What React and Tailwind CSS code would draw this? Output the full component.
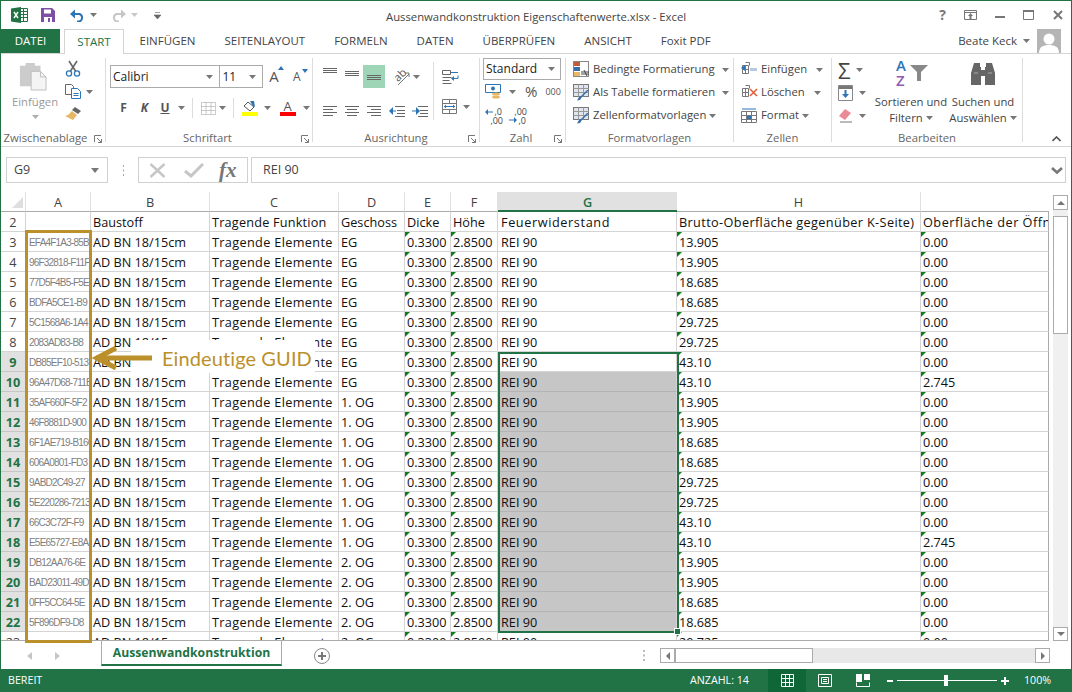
import React from 'react';

const FONT = "font-['Open_Sans','Noto_Sans',sans-serif]";

// sheet data
const guids = ['EFA4F1A3-85B', '96F32818-F11F', '77D5F4B5-F5E', 'BDFA5CE1-B9', '5C1568A6-1A4', '2083AD83-B8', 'DB85EF10-513', '96A47D68-711B', '35AF660F-5F2', '46F8881D-900', '6F1AE719-B16C', '606A0801-FD3', '9ABD2C49-27', '5E220286-7213', '66C3C72F-F9', 'E5E65727-E8A', 'DB12AA76-6E', 'BAD23011-49D', '0FF5CC64-5E', '5F896DF9-D8', ''];
const brutto = ['13.905', '13.905', '18.685', '18.685', '29.725', '29.725', '43.10', '43.10', '13.905', '13.905', '18.685', '18.685', '29.725', '29.725', '43.10', '43.10', '13.905', '13.905', '18.685', '18.685', '29.725'];
const geschoss = (i) => (i < 8 ? 'EG' : i < 16 ? '1. OG' : '2. OG');
const GRID = 'grid grid-cols-[25px_65px_119px_129px_66px_46px_47px_179px_244px_128px]';
const LINE = 'border-r border-b border-[#d4d4d4]';

const Caret = ({ className = '' }) => (
  <svg width="7" height="4" viewBox="0 0 7 4" className={`shrink-0 ${className}`}><path d="M0 0h7L3.500 4z" fill="#777" /></svg>
);

const Launcher = () => (
  <svg width="8" height="8" viewBox="0 0 8 8" className="shrink-0"><path d="M.5 7V.5H7M7.500 7.500 3 3M7.500 4v3.500H4" fill="none" stroke="#777" /></svg>
);

const Lines = ({ rows, w = 14 }) => (
  <svg width={w} height="14" viewBox={`0 0 ${w} 14`} className="shrink-0">
    {rows.map(([y, x1, x2], i) => <path key={i} d={`M${x1} ${y}.5H${x2}`} stroke="#666" />)}
  </svg>
);

const Tab = ({ children }) => <div className="px-[14.5px] text-[#444]">{children}</div>;

const Group = ({ w, label, launcher, children }) => (
  <div className={`${w} my-[4px] flex shrink-0 flex-col border-r border-[#dcdcdc]`}>
    <div className="flex-1">{children}</div>
    <div className="relative -mb-[4px] flex h-[16px] items-center justify-center text-[11.3px] text-[#666]">
      {label}
      {launcher && <div className="absolute right-[3px] top-[5px]"><Launcher /></div>}
    </div>
  </div>
);

const StyleItem = ({ icon, children, caretClass = 'ml-1' }) => (
  <div className="flex h-[23px] items-center gap-[3px] text-[11.3px] text-[#444]">
    <div className="flex w-[18px] justify-center">{icon}</div>
    <span className="whitespace-nowrap">{children}</span>
    <Caret className={caretClass} />
  </div>
);

const TableIcon = ({ brush = true }) => (
  <svg width="17" height="17" viewBox="0 0 17 17">
    <rect x=".5" y=".5" width="15" height="12" fill={brush ? '#dfe6ef' : '#fff'} stroke="#777" />
    <path d="M.5 4.500h15M.5 8.500h15M5.500 .5v12M10.500 .5v12" stroke="#999" />
    {brush && <path d="M16 6 9 13l-2 3-3 .5 2-3.500 2-1 6-6z" fill="#3a6ea8" />}
  </svg>
);

const CellGridIcon = ({ children }) => (
  <svg width="17" height="15" viewBox="0 0 17 15">
    <path d="M1.500 3.500h6v8h-6zM1.500 7.500h6M4.500 3.500v8M4.500 .5h4v3" fill="none" stroke="#777" />
    {children}
  </svg>
);

const Ribbon = () => (
  <div className="flex h-[93px] shrink-0 border-b border-[#d4d4d4] bg-white">
    {/* Zwischenablage */}
    <Group w="w-[105px]" label={<span className="-ml-[15px]">Zwischenablage</span>} launcher>
      <div className="flex">
        <div className="ml-[4px] flex w-[60px] flex-col items-center pt-[3px] text-[11.3px] text-[#999]">
          <svg width="28" height="30" viewBox="0 0 30 32" className="-ml-[5px]">
            <path d="M1 5h6V2h10v3h6v22H1z" fill="#ccc" />
            <path d="M13 11h10l6 6v14H13z" fill="#f4f4f4" stroke="#bbb" />
            <path d="M23 11v6h6" fill="none" stroke="#bbb" />
          </svg>
          <span className="mt-[3px] leading-[16px]">Einfügen</span>
          <Caret className="mt-[5px] opacity-60" />
        </div>
        <div className="flex flex-col items-start gap-[7px] pt-[2px]">
          <svg width="16" height="17" viewBox="0 0 16 17" fill="none">
            <path d="M4 1l6.500 10M12 1 5.500 11" stroke="#666" strokeWidth="1.6" />
            <circle cx="4" cy="13.5" r="2.6" stroke="#2e75b6" strokeWidth="1.3" />
            <circle cx="12" cy="13.5" r="2.6" stroke="#2e75b6" strokeWidth="1.3" />
          </svg>
          <div className="flex items-center gap-[5px]">
            <svg width="16" height="15" viewBox="0 0 16 15" fill="#fff">
              <path d="M.5.5h6l2 2v8h-8z" stroke="#666" />
              <path d="M6.500 4.500h6l3 3v7h-9z" stroke="#2e75b6" />
              <path d="M8.500 9.500h5M8.500 11.500h5" stroke="#2e75b6" />
            </svg>
            <Caret />
          </div>
          <svg width="17" height="15" viewBox="0 0 17 15">
            <path d="M10 1l6 4-3 3-6-4z" fill="#666" />
            <path d="M7 5l5 4-4 5-8-4 3-1z" fill="#e8b766" />
          </svg>
        </div>
      </div>
    </Group>

    {/* Schriftart */}
    <Group w="w-[207px]" label={<span className="-ml-[3px]">Schriftart</span>} launcher>
      <div className="flex items-center pl-[4px] pt-[7px]">
        <div className="flex h-[23px] w-[111px] items-center justify-between border border-[#ababab] pl-[2px] pr-[6px] text-[12px] text-[#222]">Calibri<Caret /></div>
        <div className="-ml-px flex h-[23px] w-[44px] items-center justify-between border border-[#ababab] pl-[2px] pr-[6px] text-[12px] text-[#222]">11<Caret /></div>
        <div className="relative ml-[6px] w-[20px] text-[15px] text-[#555]">A<span className="absolute left-[9px] top-[1px] h-0 w-0 border-x-[3px] border-b-[4px] border-x-transparent border-b-[#2e75b6]" /></div>
        <div className="relative ml-[3px] w-[20px] pl-[1px] text-[12px] text-[#555]">A<span className="absolute left-[10px] top-[1px] h-0 w-0 border-x-[3px] border-t-[4px] border-x-transparent border-t-[#2e75b6]" /></div>
      </div>
      <div className="flex h-[34px] items-center pl-[7px] pt-[6px] text-[#555]">
        <span className="w-[21px] text-center text-[12px] font-bold">F</span>
        <span className="w-[21px] text-center text-[12px] font-bold italic">K</span>
        <span className="w-[20px] text-center text-[12px] font-bold underline">U</span>
        <Caret className="ml-[3px]" />
        <div className="mx-[7px] h-[20px] w-px bg-[#dcdcdc]" />
        <svg width="15" height="13" viewBox="0 0 15 13" className="ml-[1px]"><path d="M.5.5h14v12H.5zM5 .5v12M10 .5v12M.5 4.500h14M.5 8.500h14" fill="none" stroke="#999" strokeDasharray="1 1" /></svg>
        <Caret className="ml-[3px]" />
        <div className="mx-[7px] h-[20px] w-px bg-[#dcdcdc]" />
        <div className="flex w-[17px] flex-col items-center">
          <svg width="15" height="11" viewBox="0 0 15 11"><path d="M6 1l6 5-4 4-6-5z" fill="#fff" stroke="#555" /><path d="M8 0h4l1 6-2-1z" fill="#2e75b6" /></svg>
          <div className="h-[4px] w-[16px] bg-[#ffff00]" />
        </div>
        <Caret className="ml-[6px]" />
        <div className="ml-[8px] flex w-[17px] flex-col items-center">
          <span className="h-[12px] text-[13px] leading-[12px]">A</span>
          <div className="h-[4px] w-[16px] bg-[#ff0000]" />
        </div>
        <Caret className="ml-[7px]" />
      </div>
    </Group>

    {/* Ausrichtung */}
    <Group w="w-[167px]" label="Ausrichtung" launcher>
      <div className="flex pl-[6px]">
        <div className="flex w-[112px] flex-col">
          <div className="flex h-[31px] items-start pt-[7px]">
            <div className="flex h-[23px] w-[22px] items-start justify-center pt-[2px]"><Lines rows={[[1, 0, 14], [3, 0, 14], [5, 0, 14]]} /></div>
            <div className="flex h-[23px] w-[22px] items-start justify-center pt-[2px]"><Lines rows={[[4, 0, 14], [6, 0, 14], [8, 0, 14]]} /></div>
            <div className="flex h-[23px] w-[22px] items-start justify-center bg-[#9fd5b7] pt-[2px]"><Lines rows={[[8, 0, 14], [10, 0, 14], [12, 0, 14]]} /></div>
            <div className="relative ml-[6px] flex h-[23px] w-[20px] items-center justify-center">
              <span className="-translate-x-[2px] -translate-y-[2px] -rotate-45 text-[11px] leading-none text-[#555]">ab</span>
              <svg width="20" height="20" viewBox="0 0 20 20" className="absolute left-0 top-[2px]"><path d="M7 18 18 7M14 6h4v4" fill="none" stroke="#777" /></svg>
            </div>
            <Caret className="ml-[2px] mt-[10px]" />
          </div>
          <div className="flex h-[37px] items-center pt-[6px]">
            <div className="flex w-[22px] justify-center"><Lines rows={[[2, 0, 14], [5, 0, 10], [8, 0, 14], [11, 0, 10]]} /></div>
            <div className="flex w-[22px] justify-center"><Lines rows={[[2, 0, 14], [5, 2, 12], [8, 0, 14], [11, 2, 12]]} /></div>
            <div className="flex w-[22px] justify-center"><Lines rows={[[2, 0, 14], [5, 4, 14], [8, 0, 14], [11, 4, 14]]} /></div>
            <div className="flex w-[24px] justify-center">
              <svg width="16" height="14" viewBox="0 0 16 14"><path d="M6 2.500h10M8 6.500h8M8 9.500h8M6 12.500h10" stroke="#666" /><path d="M0 7l4-4v8z" fill="#2e75b6" /><path d="M3 6.500h4v1H3z" fill="#2e75b6" /></svg>
            </div>
            <div className="flex w-[22px] justify-center">
              <svg width="16" height="14" viewBox="0 0 16 14"><path d="M6 2.500h10M8 6.500h8M8 9.500h8M6 12.500h10" stroke="#666" /><path d="M8 7 4 3v8z" fill="#2e75b6" /><path d="M0 6.500h5v1H0z" fill="#2e75b6" /></svg>
            </div>
          </div>
        </div>
        <div className="mx-[2px] mt-[4px] h-[58px] w-px bg-[#dcdcdc]" />
        <div className="flex flex-col pl-[6px]">
          <svg width="17" height="16" viewBox="0 0 17 16" className="mt-[11px]"><path d="M.5 1.500h8v4h-8zM.5 8.500h9M.5 11.500h7M.5 14.500h9" fill="none" stroke="#666" /><path d="M9 3.500h7M11 9.500h5v-3" fill="none" stroke="#2e75b6" /><path d="M9 9.500l3-2.500v5z" fill="#2e75b6" /></svg>
          <div className="mt-[14px] flex items-center gap-[5px]">
            <svg width="16" height="15" viewBox="0 0 16 15"><path d="M.5.5h14v14H.5zM.5 4.500h14M.5 10.500h14M7.500 .5v4M7.500 10.500v4" fill="none" stroke="#777" /><path d="M2 7.500h11" stroke="#2e75b6" /><path d="M2 7.500l2-2v4zM13 7.500l-2-2v4z" fill="#2e75b6" /></svg>
            <Caret />
          </div>
        </div>
      </div>
    </Group>

    {/* Zahl */}
    <Group w="w-[86px]" label={<span className="-ml-[3px]">Zahl</span>} launcher>
      <div className="pl-[3px]">
        <div className="flex h-[22px] w-[78px] items-center justify-between border border-[#ababab] pl-[2px] pr-[5px] text-[12px] text-[#222]">Standard<Caret /></div>
        <div className="flex h-[22px] items-center pl-[2px] pt-[1px]">
          <svg width="17" height="17" viewBox="0 0 17 17"><path d="M.5 1.500h15v8H.5z" fill="#fff" stroke="#2e75b6" /><circle cx="8" cy="5.5" r="2" fill="#2e75b6" /><ellipse cx="11" cy="11" rx="4" ry="1.6" fill="#e8b766" /><ellipse cx="11" cy="14" rx="4" ry="1.6" fill="#e8b766" /></svg>
          <Caret className="ml-[7px]" />
          <span className="ml-[9px] text-[15px] leading-none text-[#555]">%</span>
          <span className="ml-[8px] text-[9px] leading-none text-[#555]">000</span>
        </div>
        <div className="flex h-[25px] items-center gap-[6px] pl-[2px] pt-[2px] text-[9px] leading-[9px] text-[#444]">
          <div className="relative h-[18px] w-[18px]">
            <span className="absolute right-[1px] top-0">,0</span>
            <span className="absolute right-0 bottom-0">,00</span>
            <svg width="8" height="6" viewBox="0 0 8 6" className="absolute left-0 top-[2px]"><path d="M0 3l3-3v6zM3 2.500h5v1H3z" fill="#2e75b6" /></svg>
          </div>
          <div className="relative h-[18px] w-[18px]">
            <span className="absolute right-0 top-0">,00</span>
            <span className="absolute right-[1px] bottom-0">,0</span>
            <svg width="8" height="6" viewBox="0 0 8 6" className="absolute left-0 bottom-[2px]"><path d="M8 3 5 0v6zM0 2.500h5v1H0z" fill="#2e75b6" /></svg>
          </div>
        </div>
      </div>
    </Group>

    {/* Formatvorlagen */}
    <Group w="w-[168px]" label="Formatvorlagen">
      <div className="pl-[6px]">
        <StyleItem icon={
          <svg width="17" height="17" viewBox="0 0 17 17"><rect x=".5" y=".5" width="15" height="15" fill="#fff" stroke="#888" /><path d="M1 1h6v4H1z" fill="#c55a3a" /><path d="M1 6h6v4H1z" fill="#3a6ea8" /><path d="M1 11h6v4H1z" fill="#e8b766" /><path d="M8 11h8M8 13h8M11 9l3 6" stroke="#444" /></svg>
        }>Bedingte Formatierung</StyleItem>
        <StyleItem icon={<TableIcon />}>Als Tabelle formatieren</StyleItem>
        <StyleItem icon={<TableIcon />} caretClass="">Zellenformatvorlagen</StyleItem>
      </div>
    </Group>

    {/* Zellen */}
    <Group w="w-[98px]" label="Zellen">
      <div className="pl-[6px]">
        <StyleItem caretClass="ml-[6px]" icon={<CellGridIcon><path d="M9 6h7v3H9z" fill="#b6c9e0" /><path d="M0 6l4-3v6z" fill="#2e75b6" /></CellGridIcon>}>Einfügen</StyleItem>
        <StyleItem caretClass="ml-[6px]" icon={<CellGridIcon><path d="M9 4l7 7M16 4l-7 7" stroke="#e2603c" strokeWidth="1.6" /></CellGridIcon>}>Löschen</StyleItem>
        <StyleItem caretClass="" icon={
          <svg width="17" height="16" viewBox="0 0 17 16"><path d="M.5 3.500h15v11H.5zM.5 7.500h15M.5 11.500h15M5.500 3.500v11M10.500 3.500v11" fill="none" stroke="#777" /><path d="M6 8h4v3H6z" fill="#2e75b6" /><path d="M1 1h14" stroke="#2e75b6" /></svg>
        }>Format</StyleItem>
      </div>
    </Group>

    {/* Bearbeiten */}
    <Group w="w-[191px]" label="Bearbeiten">
      <div className="flex">
        <div className="flex w-[40px] flex-col items-start pl-[6px]">
          <div className="flex h-[23px] items-center gap-[6px]"><span className="text-[22px] leading-none text-[#444]">Σ</span><Caret /></div>
          <div className="flex h-[23px] items-center gap-[6px]">
            <svg width="15" height="16" viewBox="0 0 15 16"><path d="M.5 .5h14v15H.5z" fill="#fff" stroke="#888" /><path d="M1 1h13v3H1z" fill="#777" /><path d="M6.500 5h2v4h2.500l-3.500 4L4 9h2.500z" fill="#2e75b6" /></svg>
            <Caret />
          </div>
          <div className="flex h-[23px] items-center gap-[6px]">
            <svg width="15" height="14" viewBox="0 0 15 14"><path d="M7 0l6 4-6 7-6-4z" fill="#ea8a96" /><path d="M2 13h12" stroke="#777" /></svg>
            <Caret />
          </div>
        </div>
        <div className="flex w-[78px] flex-col items-center text-[11.3px] leading-[16px] text-[#444]">
          <div className="relative h-[36px] w-[34px]">
            <span className="absolute left-[2px] top-[0px] text-[15px] font-semibold leading-[15px] text-[#2e75b6]">A</span>
            <span className="absolute left-[2px] top-[15px] text-[15px] font-semibold leading-[15px] text-[#8e5bb5]">Z</span>
            <svg width="18" height="16" viewBox="0 0 18 16" className="absolute right-0 top-[7px]"><path d="M0 0h18l-7 7v9H7V7z" fill="#888" /></svg>
          </div>
          <span className="whitespace-nowrap">Sortieren und</span>
          <span className="flex items-center gap-[3px]">Filtern<Caret /></span>
        </div>
        <div className="flex w-[66px] flex-col items-center text-[11.3px] leading-[16px] text-[#444]">
          <svg width="26" height="26" viewBox="0 0 26 26" className="mb-[8px] mt-[2px]">
            <path d="M4 3h6v4h1v18H1V13zM22 3h-6v4h-1v18h10V13zM11 10h4v6h-4z" fill="#666" />
            <path d="M4 13h4M18 13h4" stroke="#aaa" />
          </svg>
          <span className="whitespace-nowrap">Suchen und</span>
          <span className="flex items-center gap-[3px]">Auswählen<Caret /></span>
        </div>
      </div>
    </Group>
    <div className="flex flex-1 items-end justify-end pb-[4px] pr-[10px]">
      <svg width="9" height="6" viewBox="0 0 9 6"><path d="M.5 5 4.500 1l4 4" fill="none" stroke="#555" strokeWidth="1.6" /></svg>
    </div>
  </div>
);

const FormulaBar = () => (
  <div className="flex h-[45px] shrink-0 items-start bg-white pl-[5px] pr-[5px] pt-[10px]">
    <div className="flex h-[26px] w-[102px] items-center justify-between border border-[#d0d0d0] pl-[7px] pr-[8px] text-[12.5px] text-[#444]">
      G9<svg width="8" height="5" viewBox="0 0 8 5"><path d="M0 0h8L4 5z" fill="#777" /></svg>
    </div>
    <div className="flex h-[26px] w-[30px] items-center justify-center">
      <svg width="3" height="11" viewBox="0 0 3 11"><path d="M1 0h1v2H1zM1 4.500h1v2H1zM1 9h1v2H1z" fill="#aaa" /></svg>
    </div>
    <div className="flex h-[26px] w-[110px] items-center border border-[#d0d0d0] text-[#777]">
      <div className="flex w-[37px] justify-center"><svg width="17" height="15" viewBox="0 0 17 15"><path d="M1.500 1l14 13M15.500 1l-14 13" stroke="#c6c6c6" strokeWidth="2.4" /></svg></div>
      <div className="flex w-[36px] justify-center"><svg width="20" height="15" viewBox="0 0 20 15"><path d="M1 8l6 5L19 1" fill="none" stroke="#c6c6c6" strokeWidth="3" /></svg></div>
      <span className="ml-[7px] font-['Liberation_Serif',serif] text-[21px] font-bold italic leading-none">fx</span>
    </div>
    <div className="ml-[3px] flex h-[26px] flex-1 items-center justify-between border border-[#d0d0d0] pl-[11px] pr-[2px] text-[12.5px] text-[#444]">
      REI 90
      <svg width="12" height="9" viewBox="0 0 12 9"><path d="M1 2l5 4.500L11 2" fill="none" stroke="#777" strokeWidth="2.6" /></svg>
    </div>
  </div>
);

const Corner = () => <span className="absolute left-0 top-0 h-0 w-0 border-r-[5px] border-t-[5px] border-r-transparent border-t-[#0e7d19]" />;

const Cell = ({ children, flag, className = '' }) => (
  <div className={`relative h-[20px] overflow-hidden whitespace-nowrap pl-[2px] leading-[21px] ${LINE} ${className}`}>
    {flag && <Corner />}
    {children}
  </div>
);

const Sheet = () => {
  const cols = ['A', 'B', 'C', 'D', 'E', 'F', 'G', 'H', ''];
  return (
    <div className="relative h-[449px] w-[1048px] shrink-0 overflow-hidden border-b border-[#ababab] text-[12.7px] text-[#111]">
      <div className={GRID}>
        <div className="relative h-[20px] border-b border-r border-[#ababab] border-r-[#e0e0e0]">
          <svg width="11" height="11" viewBox="0 0 11 11" className="absolute bottom-[3px] right-[2px]"><path d="M11 0v11H0z" fill="#dfdfdf" /></svg>
        </div>
        {cols.map((c, i) => (
          <div key={i} className={c === 'G'
            ? 'h-[20px] border-b-2 border-[#217346] bg-[#e1e1e1] text-center font-semibold leading-[20px] text-[#217346]'
            : c === ''
              ? 'h-[20px] border-b border-[#ababab]'
              : 'h-[20px] border-b border-r border-[#ababab] border-r-[#e0e0e0] text-center leading-[21px] text-[#444]'}>{c}</div>
        ))}
        <div className={`h-[20px] overflow-hidden text-center leading-[21px] text-[#444] ${LINE}`}>2</div>
        <Cell />
        <Cell>Baustoff</Cell>
        <Cell className="tracking-[0.2px]">Tragende Funktion</Cell>
        <Cell>Geschoss</Cell>
        <Cell>Dicke</Cell>
        <Cell>Höhe</Cell>
        <Cell className="pl-[3px] tracking-[0.6px]">Feuerwiderstand</Cell>
        <Cell className="tracking-[0.37px]">Brutto-Oberfläche gegenüber K-Seite)</Cell>
        <Cell className="border-r-[#ababab] tracking-[0.5px]">Oberfläche der Öffnungen</Cell>
        {guids.map((g, i) => {
          const n = i + 3;
          const sel = n >= 9 && n <= 22;
          return (
            <React.Fragment key={n}>
              <div className={sel
                ? 'h-[20px] overflow-hidden border-b border-r border-[#c6c6c6] border-r-[#9e9e9e] bg-[#e1e1e1] text-center font-bold leading-[21px] text-[#217346]'
                : `h-[20px] overflow-hidden text-center leading-[21px] text-[#444] ${LINE}`}>{n}</div>
              <Cell className="pl-[3px] font-['Liberation_Sans',sans-serif] text-[10px] tracking-[-0.8px] text-[#808080]">{g}</Cell>
              <Cell>AD BN 18/15cm</Cell>
              <Cell className="tracking-[0.35px]">Tragende Elemente</Cell>
              <Cell>{geschoss(i)}</Cell>
              <Cell flag>0.3300</Cell>
              <Cell flag>2.8500</Cell>
              <Cell className={n >= 10 && n <= 22 ? 'border-b-[#b4b4b4] bg-[#c6c6c6] pl-[3px]' : 'pl-[3px]'}>REI 90</Cell>
              <Cell flag>{brutto[i]}</Cell>
              <Cell flag className="border-r-[#ababab]">{n === 10 || n === 18 ? '2.745' : '0.00'}</Cell>
            </React.Fragment>
          );
        })}
      </div>
      {/* selection G9:G22 */}
      <div className="absolute left-[497px] top-[160px] h-[281px] w-[181px] border-2 border-[#217346]">
        <div className="absolute -bottom-[4px] -right-[4px] h-[7px] w-[7px] border border-white bg-[#217346]" />
      </div>
    </div>
  );
};

const VScroll = () => (
  <div className="ml-[4px] flex h-[449px] w-[15px] shrink-0 flex-col pt-[3px]">
    <div className="flex flex-1 flex-col bg-[#f0f0f0]">
      <div className="flex h-[15px] items-center justify-center border border-[#ababab] bg-white"><svg width="8" height="4" viewBox="0 0 8 4"><path d="M4 0l4 4H0z" fill="#777" /></svg></div>
      <div className="mt-[6px] h-[118px] border border-[#ababab] bg-white" />
      <div className="flex-1" />
      <div className="flex h-[14px] items-center justify-center border border-[#ababab] bg-white"><svg width="8" height="4" viewBox="0 0 8 4"><path d="M0 0h8L4 4z" fill="#777" /></svg></div>
    </div>
  </div>
);

const SheetTabs = () => (
  <div className="flex h-[28px] shrink-0 items-start bg-white">
    <div className="flex w-[100px] items-center pl-[26px] pt-[11px]">
      <svg width="5" height="8" viewBox="0 0 5 8"><path d="M5 0v8L0 4z" fill="#c6c6c6" /></svg>
      <svg width="5" height="8" viewBox="0 0 5 8" className="ml-[23px]"><path d="M0 0v8l5-4z" fill="#c6c6c6" /></svg>
    </div>
    <div className="flex h-[25px] w-[181px] items-center justify-center border-x border-b-2 border-x-[#ababab] border-b-[#217346] pt-[2px] text-[12.2px] font-bold text-[#217346]">Aussenwandkonstruktion</div>
    <div className="ml-[32px] mt-[7px] flex h-[16px] w-[16px] items-center justify-center rounded-full border border-[#888]">
      <svg width="8" height="8" viewBox="0 0 8 8"><path d="M3 0h2v3h3v2H5v3H3V5H0V3h3z" fill="#777" /></svg>
    </div>
    <div className="ml-[313px] mt-[9px] h-[10px] w-[3px]">
      <svg width="3" height="11" viewBox="0 0 3 11"><path d="M0 0h2v2H0zM0 4.500h2v2H0zM0 9h2v2H0z" fill="#bbb" /></svg>
    </div>
    <div className="ml-[14px] mt-[7px] flex h-[15px] w-[390px] bg-[#e8e8e8]">
      <div className="flex w-[15px] items-center justify-center border border-[#ababab] bg-white"><svg width="4" height="8" viewBox="0 0 4 8"><path d="M4 0v8L0 4z" fill="#777" /></svg></div>
      <div className="w-[138px] border border-[#ababab] bg-white" />
      <div className="flex-1" />
      <div className="flex w-[15px] items-center justify-center border border-[#ababab] bg-white"><svg width="4" height="8" viewBox="0 0 4 8"><path d="M0 0v8l4-4z" fill="#777" /></svg></div>
    </div>
  </div>
);

const StatusBar = () => (
  <div className="flex h-[23px] shrink-0 items-center bg-[#217346] pl-[7px] text-[10.7px] text-white">
    <span className="w-[35px]">BEREIT</span>
    <span className="ml-[647px] w-[60px] whitespace-nowrap">ANZAHL: 14</span>
    <div className="ml-[18px] flex h-[23px] w-[38px] items-center justify-center bg-[#0f6636]">
      <svg width="13" height="13" viewBox="0 0 13 13"><path d="M.5.5h12v12H.5zM4.500 .5v12M8.500 .5v12M.5 4.500h12M.5 8.500h12" fill="none" stroke="#fff" /></svg>
    </div>
    <svg width="14" height="13" viewBox="0 0 14 13" className="ml-[12px]"><path d="M.5.5h13v12H.5zM3.500 3.500h7v6h-7zM5 5.500h4M5 7.500h4" fill="none" stroke="#fff" /></svg>
    <svg width="14" height="13" viewBox="0 0 14 13" className="ml-[24px]"><path d="M.5 8.500v4h13v-4" fill="none" stroke="#fff" /><path d="M0 0h6v8H0zM8 0h6v6H8z" fill="#fff" /></svg>
    <div className="ml-[17px] h-[2px] w-[6px] bg-white" />
    <div className="relative ml-[4px] h-px w-[100px] bg-white">
      <div className="absolute -top-[5px] left-[47px] h-[11px] w-[4px] bg-white" />
    </div>
    <svg width="8" height="8" viewBox="0 0 8 8" className="ml-[4px]"><path d="M3 0h2v3h3v2H5v3H3V5H0V3h3z" fill="#fff" /></svg>
    <span className="ml-[15px]">100%</span>
  </div>
);

const App = () => {
  return (
    <div className={`${FONT} relative flex h-[692px] w-[1072px] flex-col overflow-hidden border-x border-t border-[#217346] bg-white`}>
      {/* title bar */}
      <div className="relative flex h-[28px] shrink-0 items-center bg-white">
        <svg width="17" height="16" viewBox="0 0 17 16" className="ml-[10px]">
          <path d="M8 1.500h8.500v13H8z" fill="#fff" stroke="#217346" />
          <path d="M9 4.500h7M9 7.500h7M9 10.500h7M12.500 2v12" stroke="#217346" />
          <path d="M0 1.500 10 0v16L0 14.500z" fill="#217346" />
          <path d="M3 5l4 6M7 5l-4 6" stroke="#fff" strokeWidth="1.4" />
        </svg>
        <svg width="14" height="14" viewBox="0 0 14 14" className="ml-[13px]">
          <path d="M0 0h11l3 3v11H0z" fill="#7e4fa5" />
          <path d="M3 1.500h7v4H3z" fill="#fff" />
          <path d="M3 9h8v5H3z" fill="#fff" /><path d="M7 10h2v4H7z" fill="#7e4fa5" />
        </svg>
        <svg width="15" height="13" viewBox="0 0 15 13" className="ml-[15px]">
          <path d="M3 5h6.500a4 4 0 0 1 0 7.500H7" fill="none" stroke="#2e75b6" strokeWidth="2" />
          <path d="M0 5l5-4.500v9z" fill="#2e75b6" />
        </svg>
        <Caret className="ml-[5px]" />
        <svg width="15" height="13" viewBox="0 0 15 13" className="ml-[14px]">
          <path d="M12 5H5.500a4 4 0 0 0 0 7.500H8" fill="none" stroke="#c6c6c6" strokeWidth="2" />
          <path d="M15 5l-5-4.500v9z" fill="#c6c6c6" />
        </svg>
        <Caret className="ml-[5px] opacity-40" />
        <svg width="7" height="7" viewBox="0 0 7 7" className="ml-[16px]"><path d="M1 .5h5M0 3h7L3.500 7z" stroke="#666" strokeWidth=".6" fill="#666" /></svg>
        <span className="absolute left-[385px] top-[8px] whitespace-nowrap text-[11.3px] leading-[16px] text-[#444]">Aussenwandkonstruktion Eigenschaftenwerte.xlsx - Excel</span>
        <div className="ml-auto flex items-center pr-[8px]">
          <span className="mr-[18px] text-[14px] font-bold leading-none text-[#777]">?</span>
          <svg width="13" height="10" viewBox="0 0 13 10" className="mr-[18px]"><path d="M.5.5h12v9H.5zM.5 2.500h12" fill="none" stroke="#777" /><path d="M6.500 3 9 6H7.500v3h-2V6H4z" fill="#777" /></svg>
          <div className="mr-[18px] mt-[4px] h-[2px] w-[10px] bg-[#777]" />
          <svg width="11" height="10" viewBox="0 0 11 10" className="mr-[19px]"><path d="M.5 1.500h10v8H.5z" fill="none" stroke="#777" /><path d="M0 0h11v2H0z" fill="#777" /></svg>
          <svg width="10" height="10" viewBox="0 0 10 10"><path d="M1 1l8 8M9 1 1 9" stroke="#777" strokeWidth="2" /></svg>
        </div>
      </div>

      {/* tabs */}
      <div className="flex h-[25px] shrink-0 items-start border-b border-[#d4d4d4] text-[11.5px] uppercase leading-[24px]">
        <div className="flex h-[24px] w-[59px] items-center justify-center bg-[#217346] text-white">Datei</div>
        <div className="relative z-10 ml-[4px] mr-[1px] flex h-[25px] w-[60px] items-center justify-center border-x border-t border-[#d4d4d4] bg-white text-[#217346]">Start</div>
        <Tab>Einfügen</Tab>
        <Tab>Seitenlayout</Tab>
        <Tab>Formeln</Tab>
        <Tab>Daten</Tab>
        <Tab>Überprüfen</Tab>
        <Tab>Ansicht</Tab>
        <Tab><span className="normal-case">Foxit PDF</span></Tab>
        <div className="ml-auto flex h-[24px] items-center normal-case text-[#444]">
          Beate Keck
          <Caret className="ml-[6px] mr-[7px]" />
          <div className="mr-[10px] h-[24px] w-[24px] overflow-hidden bg-[#b5b5b5]">
            <svg width="24" height="24" viewBox="0 0 24 24"><circle cx="12" cy="10" r="5.5" fill="#fff" /><path d="M2 24c0-6 4-8 10-8s10 2 10 8z" fill="#fff" /></svg>
          </div>
        </div>
      </div>

      <Ribbon />
      <FormulaBar />

      <div className="flex shrink-0">
        <Sheet />
        <VScroll />
      </div>

      <SheetTabs />
      <StatusBar />

      {/* annotation over column A */}
      <div className="absolute left-[24px] top-[229px] h-[413px] w-[67px] border-[3px] border-[#bb902a]" />
      <div className="absolute left-[130px] top-[339px] h-[33px] w-[184px] bg-white" />
      <svg width="60" height="24" viewBox="0 0 60 24" className="absolute left-[91px] top-[345px]">
        <path d="M60 12H4" fill="none" stroke="#bb902a" strokeWidth="5" />
        <path d="M24 2 5 12l19 10" fill="none" stroke="#bb902a" strokeWidth="5" />
      </svg>
      <span className="absolute left-[161px] top-[342px] whitespace-nowrap font-['Lato',sans-serif] text-[20px] leading-[30px] tracking-[0.1px] text-[#bb902a]">Eindeutige GUID</span>
    </div>
  );
};

export default App;
